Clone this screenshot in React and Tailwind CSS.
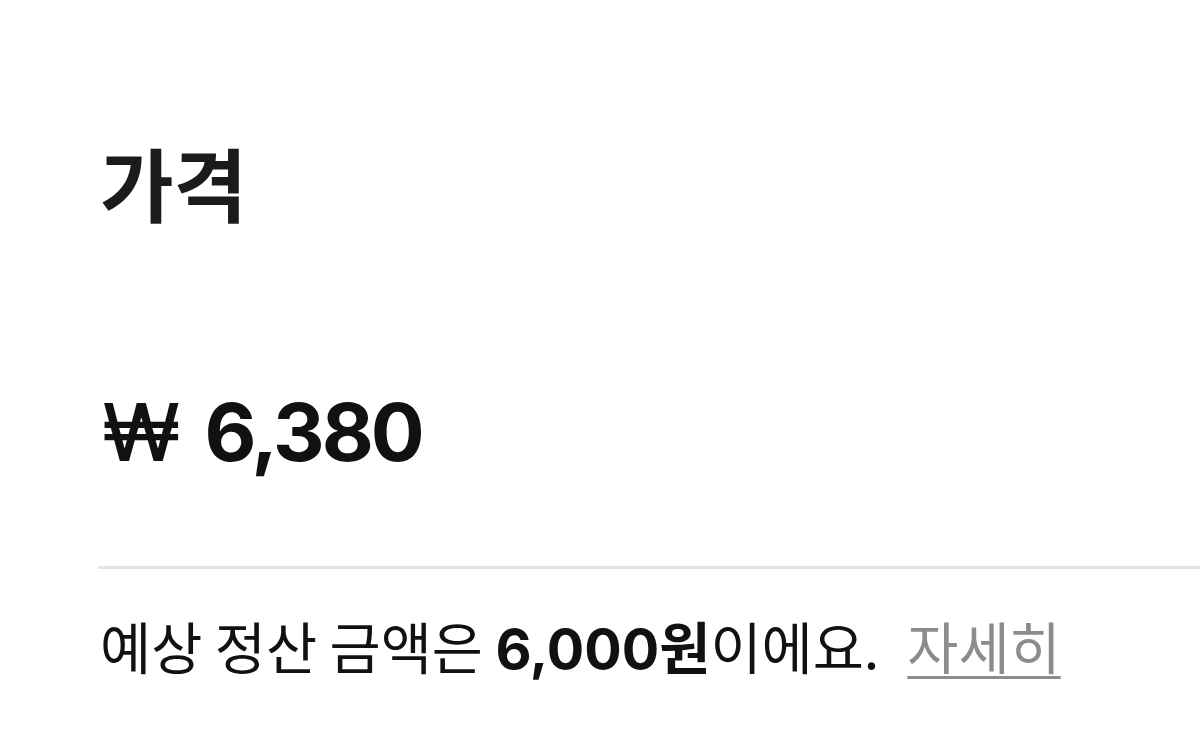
import React from "react";

const App = () => {
    return (
        <div className="w-[1200px] h-[739px] overflow-hidden bg-white pl-[98px] font-['Noto_Sans_CJK_KR',sans-serif] text-[#111]">
            <h1 className="pt-[133px] pl-[2px] text-[80px] leading-[96px] font-bold text-[#1b1b1b]">
                가격
            </h1>
            <div className="mt-[163px] flex items-center h-[80px] pl-[4px] font-['Inter','Noto_Sans_CJK_KR',sans-serif]">
                <span className="text-[80px] font-medium leading-none">₩</span>
                <span className="ml-[24px] text-[80px] font-bold leading-none tracking-[-3px]">6,380</span>
            </div>
            <div className="mt-[94px] h-[3px] bg-[#e4e4e4]" />
            <p className="mt-[44px] pl-[2px] text-[55.6px] leading-[64px]">
                예상 정산 금액은 <span className="font-bold font-['Inter','Noto_Sans_CJK_KR',sans-serif]">6,000원</span>이에요.
                <a href="#" className="ml-[28px] text-[#8c8c8c] underline decoration-[3px] underline-offset-[7px]">
                    자세히
                </a>
            </p>
        </div>
    );
};

export default App;
